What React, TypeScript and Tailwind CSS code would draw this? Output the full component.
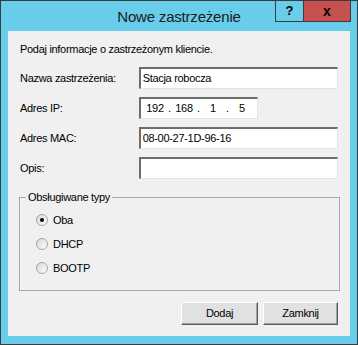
import React from 'react';

const font = { fontFamily: '"Liberation Sans", Arial, sans-serif' };

const Field: React.FC<{ w: string; children?: React.ReactNode }> = ({ w, children }) => (
  <div
    className={`${w} h-[22px] bg-white border-t-2 border-l-2 border-b border-r border-t-[#6d6d6d] border-l-[#6d6d6d] border-b-[#e3e3e3] border-r-[#e3e3e3] flex items-center pl-[2px] text-[11px] text-black`}
  >
    {children}
  </div>
);

const Radio: React.FC<{ label: string; checked?: boolean }> = ({ label, checked }) => (
  <div className="flex items-center h-[12px]">
    <div className="w-[12px] h-[12px] rounded-full border border-[#a4a4a4] bg-gradient-to-br from-[#d6d6d6] to-white flex items-center justify-center">
      {checked && <div className="w-[4px] h-[4px] rounded-full bg-black" />}
    </div>
    <span className="ml-[5px] text-[11px] text-black">{label}</span>
  </div>
);

export default function App() {
  return (
    <div style={font} className="w-[358px] h-[345px] border border-[#3c3c3c] bg-[#68cdea] flex flex-col relative">
      {/* title bar */}
      <div className="h-[30px] flex items-center justify-center">
        <span className="text-[15px] text-[#1b1b1b] pt-[2px] tracking-[-0.2px]">Nowe zastrzeżenie</span>
      </div>
      <div className="absolute top-[-1px] right-[6px] flex">
        <div className="w-[29px] h-[22px] border border-[#3c3c3c] bg-[#68cdea] flex items-center justify-center text-[13px] font-bold text-black">
          ?
        </div>
        <div className="w-[47px] h-[22px] border border-l-0 border-[#3c3c3c] bg-[#c75050] flex items-center justify-center text-[14px] font-bold text-black">
          x
        </div>
      </div>

      {/* client area */}
      <div className="mx-[7px] w-[342px] h-[305px] bg-[#f0f0f0] flex flex-col px-[12px] text-[11px] text-black tracking-[-0.3px]">
        <div className="mt-[12px] leading-[13px]">Podaj informacje o zastrzeżonym kliencie.</div>

        <div className="mt-[11px] flex flex-col gap-[8px]">
          <div className="flex items-center h-[22px]">
            <span className="w-[119px]">Nazwa zastrzeżenia:</span>
            <Field w="w-[200px]">Stacja robocza</Field>
          </div>
          <div className="flex items-center h-[22px]">
            <span className="w-[119px]">Adres IP:</span>
            <Field w="w-[119px]">
              <div className="flex">
                <span className="w-[24px] text-center">192</span>
                <span className="w-[5px] text-center">.</span>
                <span className="w-[24px] text-center">168</span>
                <span className="w-[5px] text-center">.</span>
                <span className="w-[24px] text-center">1</span>
                <span className="w-[5px] text-center">.</span>
                <span className="w-[24px] text-center">5</span>
              </div>
            </Field>
          </div>
          <div className="flex items-center h-[22px]">
            <span className="w-[119px]">Adres MAC:</span>
            <Field w="w-[200px]">08-00-27-1D-96-16</Field>
          </div>
          <div className="flex items-center h-[22px]">
            <span className="w-[119px]">Opis:</span>
            <Field w="w-[200px]" />
          </div>
        </div>

        {/* group box */}
        <div className="mt-[18px] ml-[-1px] w-[321px] h-[94px] border border-[#a8a8a8] relative flex flex-col gap-[12px] pl-[16px] pt-[16px]">
          <span className="absolute top-[-8px] left-[6px] bg-[#f0f0f0] px-[2px] leading-[14px]">Obsługiwane typy</span>
          <Radio label="Oba" checked />
          <Radio label="DHCP" />
          <Radio label="BOOTP" />
        </div>

        {/* buttons */}
        <div className="mt-[11px] flex justify-end gap-[5px]">
          <div className="w-[77px] h-[23px] bg-[#e1e1e1] border border-t-white border-l-white border-b-[#5a5a5a] border-r-[#5a5a5a] shadow-[inset_-1px_-1px_0_#a0a0a0] flex items-center justify-center">
            Dodaj
          </div>
          <div className="w-[75px] h-[23px] bg-[#e1e1e1] border border-t-white border-l-white border-b-[#5a5a5a] border-r-[#5a5a5a] shadow-[inset_-1px_-1px_0_#a0a0a0] flex items-center justify-center">
            Zamknij
          </div>
        </div>
      </div>
    </div>
  );
}
